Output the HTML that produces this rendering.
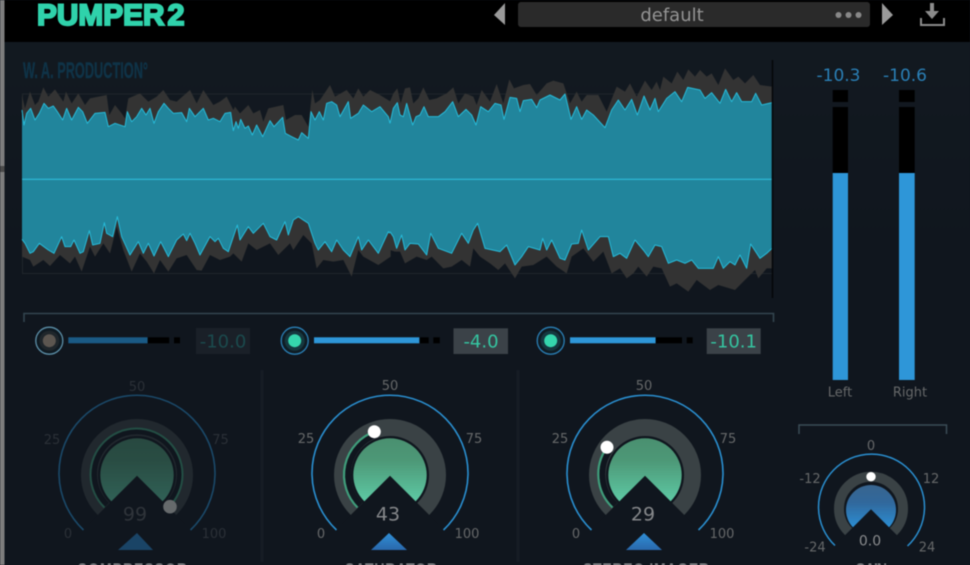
<!DOCTYPE html>
<html>
<head>
<meta charset="utf-8">
<style>
html,body{margin:0;padding:0;background:#10161e;width:970px;height:565px;overflow:hidden}
svg{display:block;position:absolute;left:0;top:0;filter:blur(.45px)}
.d{font-family:"DejaVu Sans",sans-serif}
.l{font-family:"DejaVu Sans",sans-serif;font-size:13px;fill:#666869;text-anchor:middle}
.ld{font-family:"DejaVu Sans",sans-serif;font-size:13px;fill:#2b3037;text-anchor:middle}
.v{font-family:"DejaVu Sans",sans-serif;font-size:19px;fill:#85878a;text-anchor:middle}
.b{font-family:"DejaVu Sans",sans-serif;font-size:18px;fill:#35c4a0;text-anchor:middle}
.n{font-family:"DejaVu Sans",sans-serif;font-size:17px;fill:#2a7fb5;text-anchor:middle}
.t{font-family:"Liberation Sans",sans-serif;font-size:14px;font-weight:bold;fill:#9a9c9e;text-anchor:middle}
.wf{fill:#21859c;stroke:none}
.wg{fill:#333333;stroke:none}
.ws{fill:none;stroke:#27bbd9;stroke-width:3;stroke-linejoin:round}
</style>
</head>
<body>
<svg width="970" height="565" viewBox="0 0 970 565" xmlns="http://www.w3.org/2000/svg">
<defs>
<linearGradient id="bg" x1="0" y1="0" x2="0" y2="1"><stop offset="0" stop-color="#131a21"/><stop offset=".5" stop-color="#10161e"/><stop offset="1" stop-color="#10161e"/></linearGradient>
<linearGradient id="gr" x1="0" y1="0" x2="0" y2="1"><stop offset="0" stop-color="#4a9070"/><stop offset=".3" stop-color="#4d9877"/><stop offset="1" stop-color="#62d6b0"/></linearGradient>
<linearGradient id="bl" x1="0" y1="0" x2="0" y2="1"><stop offset="0" stop-color="#38658f"/><stop offset=".35" stop-color="#31689c"/><stop offset="1" stop-color="#2a9ae4"/></linearGradient>
<linearGradient id="tr" x1="0" y1="0" x2="0" y2="1"><stop offset="0" stop-color="#2f8fd6"/><stop offset="1" stop-color="#2a68ac"/></linearGradient>
<g id="knob">
<path d="M-53.5 57A78 78 0 1 1 53.5 57" fill="none" stroke="#2a8fd0" stroke-width="1.6"/>
<circle cx="0" cy="2" r="47.5" fill="none" stroke="#3a4245" stroke-width="17"/>
</g>
<polygon id="chev" points="0,2.7 48,50.7 48,62 -48,62 -48,50.7" fill="#10161e"/>
<circle id="disc" cx="0" cy="2" r="36.7" fill="url(#gr)"/>
</defs>

<rect width="970" height="565" fill="url(#bg)"/>
<rect x="0" y="0" width="970" height="42" fill="#000"/>
<rect x="0" y="0" width="4.5" height="565" fill="#7d7d7d"/>
<rect x="0" y="166" width="4.5" height="6" fill="#4a4a4a"/>

<!-- header -->
<text x="37" y="25" font-family="'Liberation Sans',sans-serif" font-weight="bold" font-size="30" fill="#2fd2ab" stroke="#2fd2ab" stroke-width="2" textLength="127.500" lengthAdjust="spacingAndGlyphs">PUMPER</text>
<text x="167.500" y="25" font-family="'Liberation Sans',sans-serif" font-weight="bold" font-size="30" fill="#2fd2ab" stroke="#2fd2ab" stroke-width="2" textLength="17" lengthAdjust="spacingAndGlyphs">2</text>
<polygon points="494,15 505,3 505,25" fill="#9a9a9a"/>
<polygon points="893,15 882,3 882,25" fill="#9a9a9a"/>
<rect x="518" y="2" width="352" height="25" rx="3" fill="#2a2a2a"/>
<text class="d" x="672" y="21" font-size="18" fill="#949494" text-anchor="middle">default</text>
<circle cx="838.5" cy="15" r="3" fill="#888"/><circle cx="848.5" cy="15" r="3" fill="#888"/><circle cx="858.5" cy="15" r="3" fill="#888"/>
<path d="M930 3h4v8h5l-7 8-7-8h5z" fill="#8c8c8c"/>
<path d="M921 18v7h23v-7" fill="none" stroke="#8c8c8c" stroke-width="2"/>

<!-- watermark -->
<text x="23" y="78" font-family="'Liberation Sans',sans-serif" font-weight="bold" font-size="22" fill="#0f3347" stroke="#0f3347" stroke-width=".4" textLength="125" lengthAdjust="spacingAndGlyphs">W. A. PRODUCTION°</text>

<!-- grid -->
<line x1="22" y1="94" x2="772" y2="94" stroke="#20262b" stroke-width="1"/>
<line x1="22" y1="273.5" x2="772" y2="273.5" stroke="#20262b" stroke-width="1"/>
<line x1="22.5" y1="94" x2="22.5" y2="273" stroke="#20262b" stroke-width="1"/>

<!-- waveform left -->
<g transform="translate(0,80) scale(.33333)">
<polygon class="wg" points="66,300 66,45 75,85 90,35 105,75 115,65 130,22 145,50 165,28 190,65 198,35 215,70 235,40 255,75 270,55 320,45 328,105 345,75 365,100 375,115 385,55 420,40 445,65 470,50 490,30 510,60 530,65 570,30 590,70 610,30 640,75 660,65 680,50 700,90 705,80 720,100 745,75 760,100 780,90 790,125 805,85 850,75 858,120 885,105 905,105 925,140 937,30 945,70 960,60 990,15 1005,50 1040,30 1060,55 1075,25 1090,50 1110,30 1140,45 1172,65 1172,300"/>
<polygon class="wg" points="66,298 66,530 90,540 100,560 130,540 150,558 180,525 210,550 225,530 245,575 270,500 285,530 310,490 330,520 350,440 370,510 395,575 420,520 440,545 462,580 480,540 505,575 530,535 560,525 590,570 605,572 630,525 660,540 690,530 700,520 725,545 745,490 770,510 810,490 835,525 870,490 880,510 910,465 935,490 950,565 970,540 1000,545 1030,540 1055,590 1075,510 1090,530 1135,555 1172,530 1172,298"/>
<polygon class="wf" points="66,298 66,90 72,135 80,100 92,85 105,120 118,100 132,70 145,85 160,78 172,95 188,120 200,85 215,120 235,82 248,95 262,130 285,100 315,97 325,140 345,130 375,140 382,95 395,125 410,110 425,85 438,105 450,85 462,130 475,95 492,70 505,85 520,100 545,98 560,125 568,85 585,110 610,85 625,120 640,115 660,125 675,100 692,97 700,152 708,125 715,145 722,118 735,145 745,138 757,165 770,135 788,170 810,122 822,140 848,112 856,160 875,170 895,180 905,158 925,175 933,95 945,120 958,95 970,120 980,70 995,65 1010,75 1020,110 1045,65 1052,115 1075,100 1090,75 1115,95 1140,80 1165,110 1172,130 1172,298"/>
<polyline class="ws" points="66,90 72,135 80,100 92,85 105,120 118,100 132,70 145,85 160,78 172,95 188,120 200,85 215,120 235,82 248,95 262,130 285,100 315,97 325,140 345,130 375,140 382,95 395,125 410,110 425,85 438,105 450,85 462,130 475,95 492,70 505,85 520,100 545,98 560,125 568,85 585,110 610,85 625,120 640,115 660,125 675,100 692,97 700,152 708,125 715,145 722,118 735,145 745,138 757,165 770,135 788,170 810,122 822,140 848,112 856,160 875,170 895,180 905,158 925,175 933,95 945,120 958,95 970,120 980,70 995,65 1010,75 1020,110 1045,65 1052,115 1075,100 1090,75 1115,95 1140,80 1165,110 1170,130"/>
<polygon class="wf" points="66,298 66,478 75,490 90,520 100,515 118,490 145,510 162,520 185,470 195,500 212,500 222,480 240,520 250,515 268,452 278,495 300,490 313,428 320,460 338,470 352,410 365,470 390,525 415,485 430,520 445,490 462,528 482,485 505,530 530,480 550,462 560,482 570,460 585,490 600,525 630,470 645,485 655,475 670,505 685,515 712,435 720,480 745,440 760,460 790,430 810,470 830,480 855,425 865,465 880,420 895,410 925,430 945,490 955,510 975,485 995,515 1010,480 1030,510 1050,530 1075,470 1085,510 1105,480 1135,520 1165,455 1172,460 1172,298"/>
<polyline class="ws" points="66,478 75,490 90,520 100,515 118,490 145,510 162,520 185,470 195,500 212,500 222,480 240,520 250,515 268,452 278,495 300,490 313,428 320,460 338,470 352,410 365,470 390,525 415,485 430,520 445,490 462,528 482,485 505,530 530,480 550,462 560,482 570,460 585,490 600,525 630,470 645,485 655,475 670,505 685,515 712,435 720,480 745,440 760,460 790,430 810,470 830,480 855,425 865,465 880,420 895,410 925,430 945,490 955,510 975,485 995,515 1010,480 1030,510 1050,530 1075,470 1085,510 1105,480 1135,520 1165,455 1170,460"/>
</g>
<!-- waveform right -->
<g transform="translate(390,60) scale(.33333)">
<polygon class="wg" points="0,360 0,125 10,100 22,85 32,130 45,85 60,82 70,130 85,115 100,82 118,120 140,115 170,100 190,82 205,130 225,100 250,110 260,135 275,90 300,125 320,72 340,130 358,58 372,85 400,75 420,72 440,105 470,70 490,62 520,70 540,130 560,95 575,125 590,105 625,105 650,155 680,80 705,95 720,70 740,110 765,62 785,90 800,65 810,90 820,50 845,70 862,35 880,60 895,28 915,50 930,30 950,50 965,40 985,75 1005,25 1030,60 1045,50 1065,70 1090,45 1110,75 1146,80 1146,360"/>
<polygon class="wg" points="0,358 0,570 15,575 30,575 45,610 80,590 110,600 125,590 160,625 185,620 215,600 240,620 250,565 270,590 300,610 325,630 345,610 375,655 395,620 430,615 470,590 500,620 530,640 545,590 580,565 610,605 640,575 665,640 690,625 710,655 730,640 745,620 770,650 790,620 815,625 840,680 860,670 895,695 920,660 960,690 985,675 1035,690 1060,665 1095,630 1105,655 1130,625 1146,625 1146,358"/>
<polygon class="wf" points="0,358 0,190 10,145 22,128 30,165 40,170 50,130 68,195 78,170 90,165 102,140 115,170 145,170 165,155 188,125 205,170 228,148 245,165 258,195 272,140 295,155 315,130 333,135 342,178 360,112 380,115 390,155 400,122 425,118 440,143 450,120 480,105 510,120 525,102 543,178 560,140 575,178 590,150 610,165 645,203 665,150 685,120 705,150 725,118 742,165 762,108 780,150 795,115 805,155 830,115 855,95 875,125 893,82 930,90 945,115 965,98 990,130 1007,88 1025,125 1040,98 1055,125 1085,125 1097,100 1115,135 1146,128 1146,358"/>
<polyline class="ws" points="0,190 10,145 22,128 30,165 40,170 50,130 68,195 78,170 90,165 102,140 115,170 145,170 165,155 188,125 205,170 228,148 245,165 258,195 272,140 295,155 315,130 333,135 342,178 360,112 380,115 390,155 400,122 425,118 440,143 450,120 480,105 510,120 525,102 543,178 560,140 575,178 590,150 610,165 645,203 665,150 685,120 705,150 725,118 742,165 762,108 780,150 795,115 805,155 830,115 855,95 875,125 893,82 930,90 945,115 965,98 990,130 1007,88 1025,125 1040,98 1055,125 1085,125 1097,100 1115,135 1146,128"/>
<polygon class="wf" points="0,358 0,515 10,530 20,565 35,525 45,570 60,550 85,552 110,585 122,520 145,565 185,580 215,520 235,550 250,510 263,490 285,565 330,575 350,555 375,615 395,590 415,560 450,570 458,535 470,570 485,540 510,595 525,600 545,552 565,550 575,510 595,570 630,530 655,530 670,590 690,580 710,595 735,540 760,570 775,590 795,555 815,560 835,610 860,600 885,610 905,600 925,625 970,625 985,590 1000,625 1020,605 1035,615 1050,585 1070,625 1082,552 1110,595 1130,580 1146,565 1146,358"/>
<polyline class="ws" points="0,515 10,530 20,565 35,525 45,570 60,550 85,552 110,585 122,520 145,565 185,580 215,520 235,550 250,510 263,490 285,565 330,575 350,555 375,615 395,590 415,560 450,570 458,535 470,570 485,540 510,595 525,600 545,552 565,550 575,510 595,570 630,530 655,530 670,590 690,580 710,595 735,540 760,570 775,590 795,555 815,560 835,610 860,600 885,610 905,600 925,625 970,625 985,590 1000,625 1020,605 1035,615 1050,585 1070,625 1082,552 1110,595 1130,580 1146,565"/>
</g>
<line x1="22" y1="179.3" x2="772" y2="179.3" stroke="#2cb3d0" stroke-width="1.3"/>
<line x1="772.5" y1="60" x2="772.5" y2="298" stroke="#05070a" stroke-width="1.6"/>

<!-- bracket -->
<path d="M24 322V313.5H773.5V322" fill="none" stroke="#33454f" stroke-width="1.6"/>

<!-- toggle row 1 -->
<circle cx="49.3" cy="340.7" r="13.5" fill="#0f1a22" stroke="#5c8fa8" stroke-width="1.3"/>
<circle cx="49.3" cy="340.7" r="10" fill="#1f262b"/>
<circle cx="49.3" cy="340.7" r="6.5" fill="#5c5650"/>
<rect x="68.3" y="337.3" width="79.4" height="6" fill="#1a5a85"/>
<rect x="147.7" y="337.3" width="21.5" height="6" fill="#000"/>
<rect x="174" y="337.3" width="6" height="6" fill="#000"/>
<rect x="196" y="328" width="54" height="26" fill="#1a2028"/>
<text x="223" y="347.5" class="b" style="fill:#1b4a4d">-10.0</text>

<!-- toggle row 2 -->
<circle cx="294.7" cy="340.7" r="13.5" fill="#0f1c24" stroke="#2a7fb5" stroke-width="1.3"/>
<circle cx="294.7" cy="340.7" r="10" fill="#153840"/>
<circle cx="294.7" cy="340.7" r="6.5" fill="#35d6ad"/>
<rect x="314" y="337.3" width="105.3" height="6" fill="#2e96d8"/>
<rect x="420" y="337.3" width="8.7" height="6" fill="#000"/>
<rect x="433.3" y="337.3" width="6.5" height="6" fill="#000"/>
<rect x="453.5" y="328.3" width="54.5" height="25.7" fill="#3b4248"/>
<text x="481" y="347.5" class="b">-4.0</text>

<!-- toggle row 3 -->
<circle cx="550.7" cy="340.7" r="13.5" fill="#0f1c24" stroke="#2a7fb5" stroke-width="1.3"/>
<circle cx="550.7" cy="340.7" r="10" fill="#153840"/>
<circle cx="550.7" cy="340.7" r="6.5" fill="#35d6ad"/>
<rect x="570" y="337.3" width="85.7" height="6" fill="#2e96d8"/>
<rect x="655.7" y="337.3" width="26.3" height="6" fill="#000"/>
<rect x="686.7" y="337.3" width="6" height="6" fill="#000"/>
<rect x="706.7" y="328.3" width="54" height="25.7" fill="#3b4248"/>
<text x="733.7" y="347.5" class="b">-10.1</text>

<!-- dividers -->
<rect x="260.5" y="370" width="3" height="192" fill="#161c25"/>
<rect x="516.5" y="370" width="3" height="192" fill="#161c25"/>

<!-- knob 1 (disabled) -->
<g transform="translate(137,473)" opacity=".42">
<use href="#knob"/>
<path d="M-30 32A43 43 0 1 1 30 32" fill="none" stroke="#10161e" stroke-width="6"/>
<path d="M-32.5 34.5A46 46 0 1 1 32 34" fill="none" stroke="#3f9c7a" stroke-width="2"/>
<use href="#disc"/>
<use href="#chev"/>
</g>
<polygon points="137,533 118,550 153,550" fill="#1a4466"/>
<circle cx="170" cy="506.7" r="6.8" fill="#666a6c"/>
<text class="ld" x="137" y="391">50</text>
<text class="ld" x="52" y="444">25</text>
<text class="ld" x="220.500" y="444">75</text>
<text class="ld" x="68" y="538">0</text>
<text class="ld" x="214" y="538">100</text>
<text class="v" x="135" y="520.500" style="fill:#2f343a">99</text>

<!-- knob 2 -->
<g transform="translate(390,473)">
<use href="#knob"/>
<path d="M-29.500 32A42.500 42.500 0 0 1 -14.500 -38" fill="none" stroke="#10161e" stroke-width="6"/>
<path d="M-32.500 34.500A46 46 0 0 1 -15.700 -41.300" fill="none" stroke="#3f9c7a" stroke-width="2.200"/>
<use href="#disc"/>
<use href="#chev"/>
<circle cx="-15.700" cy="-41.300" r="6.500" fill="#fff"/>
</g>
<polygon points="389,533 371,550 407,550" fill="url(#tr)"/>
<text class="l" x="390" y="390">50</text>
<text class="l" x="306" y="443">25</text>
<text class="l" x="474" y="443">75</text>
<text class="l" x="321" y="538">0</text>
<text class="l" x="467" y="538">100</text>
<text class="v" x="388" y="520.500">43</text>

<!-- knob 3 -->
<g transform="translate(645,473)">
<use href="#knob"/>
<path d="M-29.500 32A42.500 42.500 0 0 1 -35 -23" fill="none" stroke="#10161e" stroke-width="6"/>
<path d="M-32.500 34.500A46 46 0 0 1 -38 -25.700" fill="none" stroke="#3f9c7a" stroke-width="2.200"/>
<use href="#disc"/>
<use href="#chev"/>
<circle cx="-38" cy="-25.700" r="6.500" fill="#fff"/>
</g>
<polygon points="644,533 626,550 662,550" fill="url(#tr)"/>
<text class="l" x="644" y="390">50</text>
<text class="l" x="560" y="443">25</text>
<text class="l" x="728" y="443">75</text>
<text class="l" x="576" y="538">0</text>
<text class="l" x="722" y="538">100</text>
<text class="v" x="643" y="520.500">29</text>

<!-- meters -->
<text class="n" x="838.500" y="81">-10.3</text>
<text class="n" x="905" y="81">-10.6</text>
<rect x="832.700" y="90" width="15.300" height="12" fill="#000"/>
<rect x="899" y="90" width="15.700" height="12" fill="#000"/>
<rect x="832.700" y="107" width="15.300" height="66" fill="#000"/>
<rect x="899" y="107" width="15.700" height="66" fill="#000"/>
<rect x="832.700" y="173" width="15.300" height="207" fill="#2e96d8"/>
<rect x="899" y="173" width="15.700" height="207" fill="#2e96d8"/>
<text class="l" x="840" y="396.500">Left</text>
<text class="l" x="910" y="396.500">Right</text>

<!-- gain -->
<path d="M799 434V425H946.500V434" fill="none" stroke="#3b4c56" stroke-width="1.500"/>
<circle cx="871" cy="508.700" r="32" fill="none" stroke="#3a4245" stroke-width="10"/>
<circle cx="871" cy="510" r="25" fill="url(#bl)"/>
<polygon points="871,509.300 907,545.300 907,550 835,550 835,545.300" fill="#10161e"/>
<path d="M835 545.500A53 53 0 1 1 907.500 546" fill="none" stroke="#2a8fd0" stroke-width="1.500"/>
<circle cx="871" cy="476.700" r="4.700" fill="#fff"/>
<text class="l" x="871" y="450">0</text>
<text class="l" x="810" y="483">-12</text>
<text class="l" x="931" y="483">12</text>
<text class="l" x="815" y="551.500">-24</text>
<text class="l" x="927" y="551.500">24</text>
<text class="d" x="870" y="545.500" font-size="14" fill="#8a8c8e" text-anchor="middle">0.0</text>

<!-- bottom labels -->
<text class="t" x="132" y="573" textLength="110" lengthAdjust="spacing">COMPRESSOR</text>
<text class="t" x="391" y="573" textLength="92" lengthAdjust="spacing">SATURATOR</text>
<text class="t" x="646" y="573" textLength="126" lengthAdjust="spacing">STEREO IMAGER</text>
<text class="t" x="871" y="573" textLength="32" lengthAdjust="spacing">GAIN</text>
</svg>
</body>
</html>
